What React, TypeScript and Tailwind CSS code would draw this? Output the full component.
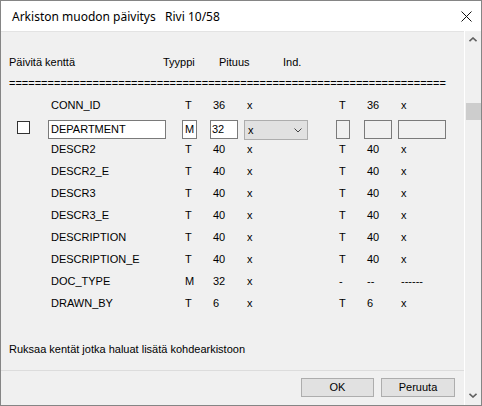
import React from 'react'

const rows = [
  { name: 'CONN_ID', t: 'T', len: '36', ind: 'x', t2: 'T', len2: '36', ind2: 'x' },
  null,
  { name: 'DESCR2', t: 'T', len: '40', ind: 'x', t2: 'T', len2: '40', ind2: 'x' },
  { name: 'DESCR2_E', t: 'T', len: '40', ind: 'x', t2: 'T', len2: '40', ind2: 'x' },
  { name: 'DESCR3', t: 'T', len: '40', ind: 'x', t2: 'T', len2: '40', ind2: 'x' },
  { name: 'DESCR3_E', t: 'T', len: '40', ind: 'x', t2: 'T', len2: '40', ind2: 'x' },
  { name: 'DESCRIPTION', t: 'T', len: '40', ind: 'x', t2: 'T', len2: '40', ind2: 'x' },
  { name: 'DESCRIPTION_E', t: 'T', len: '40', ind: 'x', t2: 'T', len2: '40', ind2: 'x' },
  { name: 'DOC_TYPE', t: 'M', len: '32', ind: 'x', t2: '-', len2: '--', ind2: '------' },
  { name: 'DRAWN_BY', t: 'T', len: '6', ind: 'x', t2: 'T', len2: '6', ind2: 'x' },
]

function Chevron({ down }: { down?: boolean }) {
  return (
    <svg width="8" height="5" viewBox="0 0 8 5" className="block">
      <path
        d={down ? 'M0.5 0.8 L4 4 L7.5 0.8' : 'M0.5 4.2 L4 1 L7.5 4.2'}
        fill="none"
        stroke="#606060"
        strokeWidth="1.6"
      />
    </svg>
  )
}

function EditRow() {
  return (
    <div className="flex h-[22px] items-start">
      <div className="w-[47px] pl-[16px]">
        <div className="mt-[5px] h-[13px] w-[13px] border border-[#333] bg-white" />
      </div>
      <div className="w-[134px]">
        <div className="mt-[4px] flex h-[19px] w-[118px] items-center border border-[#7a7a7a] bg-white pl-[2px]">DEPARTMENT</div>
      </div>
      <div className="w-[28px]">
        <div className="mt-[4px] flex h-[19px] w-[15px] items-center justify-center border border-[#7a7a7a] bg-white">M</div>
      </div>
      <div className="w-[34px]">
        <div className="mt-[4px] flex h-[19px] w-[28px] items-center border border-[#7a7a7a] bg-white pl-[1px]">32</div>
      </div>
      <div className="w-[92px]">
        <div className="mt-[4px] flex h-[20px] w-[64px] items-center justify-between border border-[#adadad] bg-[#e1e1e1] pl-[3px] pr-[5px]">
          <span>x</span>
          <svg width="8" height="5" viewBox="0 0 8 5" className="block">
            <path d="M0.5 0.5 L4 4 L7.5 0.5" fill="none" stroke="#444" strokeWidth="1" />
          </svg>
        </div>
      </div>
      <div className="w-[28px]">
        <div className="mt-[4px] h-[19px] w-[14px] border border-[#7a7a7a]" />
      </div>
      <div className="w-[34px]">
        <div className="mt-[4px] h-[19px] w-[28px] border border-[#7a7a7a]" />
      </div>
      <div>
        <div className="mt-[4px] h-[19px] w-[48px] border border-[#7a7a7a]" />
      </div>
    </div>
  )
}

export default function App() {
  return (
    <div
      className="flex h-[406px] w-[482px] flex-col border border-[#858585] bg-[#f0f0f0] text-[11px] leading-[13px] text-black"
      style={{ fontFamily: '"Liberation Sans", Arial, sans-serif' }}
    >
      {/* title bar */}
      <div className="flex h-[30px] shrink-0 items-center justify-between bg-white pl-[11px] pr-[9px]">
        <span className="text-[12px] text-black" style={{ fontFamily: '"Segoe UI", "Noto Sans", sans-serif' }}>
          Arkiston muodon päivitys&nbsp;&nbsp; Rivi 10/58
        </span>
        <svg width="11" height="11" viewBox="0 0 11 11" className="block">
          <path d="M0.5 0.5 L10.5 10.5 M10.5 0.5 L0.5 10.5" stroke="#111" strokeWidth="1" />
        </svg>
      </div>

      <div className="flex min-h-0 flex-1">
        {/* content */}
        <div className="flex flex-1 flex-col border-t border-[#e3e3e3]">
          <div className="flex h-[22px] mt-[19px] items-center pl-[8px]">
            <span className="w-[154px]">Päivitä kenttä</span>
            <span className="w-[56px]">Tyyppi</span>
            <span className="w-[64px]">Pituus</span>
            <span>Ind.</span>
          </div>
          <div className="flex h-[21px] items-center pl-[8px]">
            <div className="whitespace-nowrap">{'='.repeat(68)}</div>
          </div>

          {rows.map((r, i) =>
            r ? (
              <div key={i} className="flex h-[22px] items-center">
                <div className="w-[47px]" />
                <div className="w-[134px] pl-[3px]">{r.name}</div>
                <div className="w-[28px] pl-[3px]">{r.t}</div>
                <div className="w-[34px] pl-[3px]">{r.len}</div>
                <div className="w-[92px] pl-[3px]">{r.ind}</div>
                <div className="w-[28px] pl-[3px]">{r.t2}</div>
                <div className="w-[34px] pl-[3px]">{r.len2}</div>
                <div className="pl-[3px]">{r.ind2}</div>
              </div>
            ) : (
              <EditRow key={i} />
            )
          )}

          <div className="mt-[24px] flex h-[22px] items-center pl-[8px]">
            Ruksaa kentät jotka haluat lisätä kohdearkistoon
          </div>
          <div className="mt-[10px] border-t border-[#dcdcdc]" />
          <div className="mt-[7px] flex justify-end gap-[7px] pr-[9px]">
            <button className="flex h-[19px] w-[73px] items-center justify-center border border-[#adadad] bg-[#e1e1e1]">OK</button>
            <button className="flex h-[19px] w-[74px] items-center justify-center border border-[#adadad] bg-[#e1e1e1]">Peruuta</button>
          </div>
        </div>

        {/* scrollbar */}
        <div className="flex w-[17px] flex-col items-center border-l border-white bg-[#f0f0f0]">
          <div className="mt-[6px]">
            <Chevron />
          </div>
          <div className="mt-[61px] h-[17px] w-[15px] bg-[#cdcdcd]" />
          <div className="flex-1" />
          <div className="mb-[7px]">
            <Chevron down />
          </div>
        </div>
      </div>
    </div>
  )
}
